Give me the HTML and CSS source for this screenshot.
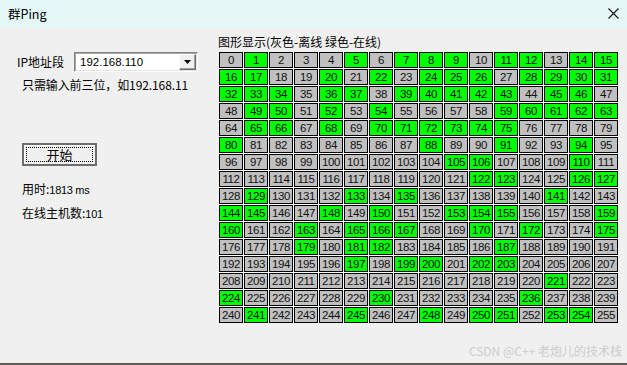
FILE: index.html
```html
<!DOCTYPE html>
<html lang="zh">
<head>
<meta charset="utf-8">
<title>群Ping</title>
<link rel="stylesheet" href="styles.css">
</head>
<body>
<div class="window">
  <div class="titlebar">
    <span class="title">群Ping</span>
    <span class="close"><svg width="11" height="11" viewBox="0 0 11 11"><path d="M0.5 0.5 L10.5 10.5 M10.5 0.5 L0.5 10.5" stroke="#111" stroke-width="1.1" fill="none"/></svg></span>
  </div>
  <div class="main">
    <div class="left">
      <div class="iprow">
        <span class="label">IP地址段</span>
        <div class="combo">
          <span class="combo-text">192.168.110</span>
          <span class="combo-btn"><svg width="7" height="4" viewBox="0 0 7 4"><path d="M0 0 H7 L3.5 4 Z" fill="#000"/></svg></span>
        </div>
      </div>
      <div class="hint">只需输入前三位，如192.168.11</div>
      <div class="btn"><span class="btn-focus">开始</span></div>
      <div class="stat stat-time">用时:<span class="num">1813 ms</span></div>
      <div class="stat stat-count">在线主机数:<span class="num">101</span></div>
    </div>
    <div class="right">
      <div class="heading">图形显示(灰色-离线 绿色-在线)</div>
      <div class="grid">
        <span>0</span><span class="on">1</span><span>2</span><span>3</span><span>4</span><span class="on">5</span><span>6</span><span class="on">7</span><span class="on">8</span><span class="on">9</span><span>10</span><span class="on">11</span><span class="on">12</span><span>13</span><span class="on">14</span><span class="on">15</span>
        <span class="on">16</span><span class="on">17</span><span>18</span><span>19</span><span class="on">20</span><span>21</span><span class="on">22</span><span>23</span><span class="on">24</span><span class="on">25</span><span class="on">26</span><span>27</span><span class="on">28</span><span class="on">29</span><span class="on">30</span><span class="on">31</span>
        <span class="on">32</span><span class="on">33</span><span class="on">34</span><span>35</span><span class="on">36</span><span class="on">37</span><span>38</span><span class="on">39</span><span class="on">40</span><span class="on">41</span><span class="on">42</span><span class="on">43</span><span>44</span><span class="on">45</span><span class="on">46</span><span>47</span>
        <span>48</span><span class="on">49</span><span class="on">50</span><span>51</span><span class="on">52</span><span>53</span><span class="on">54</span><span>55</span><span>56</span><span>57</span><span>58</span><span class="on">59</span><span class="on">60</span><span class="on">61</span><span class="on">62</span><span class="on">63</span>
        <span>64</span><span class="on">65</span><span class="on">66</span><span>67</span><span class="on">68</span><span>69</span><span class="on">70</span><span class="on">71</span><span class="on">72</span><span class="on">73</span><span class="on">74</span><span class="on">75</span><span>76</span><span>77</span><span>78</span><span>79</span>
        <span class="on">80</span><span>81</span><span>82</span><span>83</span><span>84</span><span>85</span><span>86</span><span>87</span><span class="on">88</span><span>89</span><span>90</span><span class="on">91</span><span>92</span><span>93</span><span class="on">94</span><span>95</span>
        <span>96</span><span>97</span><span>98</span><span>99</span><span>100</span><span>101</span><span>102</span><span>103</span><span>104</span><span class="on">105</span><span class="on">106</span><span>107</span><span>108</span><span>109</span><span class="on">110</span><span>111</span>
        <span>112</span><span>113</span><span>114</span><span>115</span><span>116</span><span>117</span><span>118</span><span>119</span><span>120</span><span>121</span><span class="on">122</span><span class="on">123</span><span>124</span><span>125</span><span class="on">126</span><span class="on">127</span>
        <span>128</span><span class="on">129</span><span>130</span><span>131</span><span>132</span><span class="on">133</span><span>134</span><span class="on">135</span><span>136</span><span>137</span><span>138</span><span>139</span><span>140</span><span class="on">141</span><span>142</span><span>143</span>
        <span class="on">144</span><span class="on">145</span><span>146</span><span>147</span><span class="on">148</span><span>149</span><span class="on">150</span><span>151</span><span>152</span><span class="on">153</span><span class="on">154</span><span class="on">155</span><span>156</span><span>157</span><span>158</span><span class="on">159</span>
        <span class="on">160</span><span>161</span><span>162</span><span class="on">163</span><span>164</span><span class="on">165</span><span class="on">166</span><span class="on">167</span><span>168</span><span>169</span><span class="on">170</span><span>171</span><span class="on">172</span><span>173</span><span>174</span><span class="on">175</span>
        <span>176</span><span>177</span><span>178</span><span class="on">179</span><span>180</span><span class="on">181</span><span class="on">182</span><span>183</span><span>184</span><span>185</span><span>186</span><span class="on">187</span><span>188</span><span>189</span><span>190</span><span>191</span>
        <span>192</span><span>193</span><span>194</span><span>195</span><span>196</span><span class="on">197</span><span>198</span><span class="on">199</span><span class="on">200</span><span>201</span><span class="on">202</span><span class="on">203</span><span>204</span><span>205</span><span>206</span><span>207</span>
        <span>208</span><span>209</span><span>210</span><span>211</span><span>212</span><span>213</span><span>214</span><span>215</span><span>216</span><span>217</span><span>218</span><span>219</span><span>220</span><span class="on">221</span><span>222</span><span>223</span>
        <span class="on">224</span><span>225</span><span>226</span><span>227</span><span>228</span><span>229</span><span class="on">230</span><span>231</span><span>232</span><span>233</span><span>234</span><span>235</span><span class="on">236</span><span>237</span><span>238</span><span>239</span>
        <span>240</span><span class="on">241</span><span>242</span><span>243</span><span>244</span><span class="on">245</span><span>246</span><span>247</span><span class="on">248</span><span>249</span><span class="on">250</span><span class="on">251</span><span>252</span><span class="on">253</span><span class="on">254</span><span>255</span>
      </div>
    </div>
  </div>
  <div class="watermark">CSDN @C++ 老炮儿的技术栈</div>
</div>
</body>
</html>
```

FILE: styles.css
```css
* { box-sizing: border-box; }
html, body { margin: 0; padding: 0; }
body {
  width: 627px;
  height: 365px;
  overflow: hidden;
  background: #f0f0f0;
  font-family: "Liberation Sans", "Noto Sans CJK SC", sans-serif;
  font-size: 12px;
  color: #000;
}
.window {
  position: relative;
  width: 627px;
  height: 365px;
  display: flex;
  flex-direction: column;
  background: #f0f0f0;
  border-bottom: 2px solid #5e5a57;
}
.titlebar {
  height: 28px;
  flex: none;
  background: #e5f7f7;
  display: flex;
  align-items: center;
  justify-content: space-between;
  padding-left: 8px;
}
.title {
  font-family: "Noto Sans CJK SC", sans-serif;
  font-size: 12.5px;
  line-height: 16px;
}
.close {
  display: flex;
  align-items: center;
  justify-content: center;
  width: 24px;
  height: 28px;
  padding-right: 4px;
  padding-bottom: 2px;
}
.main {
  flex: 1;
  display: flex;
}
.left {
  width: 218px;
  flex: none;
  padding: 24px 0 0 17px;
  display: flex;
  flex-direction: column;
  align-items: flex-start;
  font-family: "Noto Sans CJK SC", sans-serif;
}
.iprow {
  display: flex;
  align-items: center;
  height: 20px;
}
.label {
  width: 57px;
  font-size: 12px;
  line-height: 16px;
}
.combo {
  width: 124px;
  height: 20px;
  display: flex;
  align-items: stretch;
  background: #fff;
  border-top: 1px solid #828282;
  border-left: 1px solid #828282;
  border-right: 1px solid #fff;
  border-bottom: 1px solid #fff;
  box-shadow: inset 1px 1px 0 #a8a8a8, inset -1px -1px 0 #e3e3e3;
}
.combo-text {
  flex: 1;
  padding-left: 5px;
  font-family: "Liberation Sans", sans-serif;
  font-size: 11.5px;
  line-height: 18px;
}
.combo-btn {
  width: 17px;
  margin: 1px 1px 1px 0;
  background: #f0f0f0;
  border-top: 1px solid #fff;
  border-left: 1px solid #fff;
  border-right: 1px solid #6d6d6d;
  border-bottom: 1px solid #6d6d6d;
  box-shadow: inset -1px -1px 0 #a0a0a0;
  display: flex;
  align-items: center;
  justify-content: center;
}
.hint {
  margin: 5px 0 0 5px;
  font-size: 12px;
  line-height: 16px;
  letter-spacing: -0.1px;
}
.btn {
  margin: 50px 0 0 5px;
  width: 75px;
  height: 23px;
  padding: 2px;
  background: #f0f0f0;
  border: 2px solid #6e6e6e;
  box-shadow: inset 1px 1px 0 #fff;
  display: flex;
}
.btn-focus {
  flex: 1;
  border: 1px dotted #000;
  display: flex;
  align-items: center;
  justify-content: center;
  font-size: 13px;
  line-height: 14px;
}
.stat {
  margin-left: 5px;
  font-size: 12px;
  line-height: 16px;
}
.stat-time { margin-top: 15px; }
.stat-count { margin-top: 7px; }
.num {
  font-family: "Liberation Sans", sans-serif;
  font-size: 11px;
  letter-spacing: -0.3px;
}
.right {
  flex: 1;
  padding-top: 6px;
  display: flex;
  flex-direction: column;
  align-items: flex-start;
}
.heading {
  font-family: "Noto Sans CJK SC", sans-serif;
  font-size: 12px;
  line-height: 16px;
  height: 18px;
}
.grid {
  margin-left: 1px;
  display: grid;
  grid-template-columns: repeat(16, 24px);
  grid-auto-rows: 16px;
  gap: 1px;
  background: #fff;
}
.grid > span {
  background: #c0c0c0;
  border: 1px solid #000;
  font-family: "Liberation Sans", sans-serif;
  font-size: 11.5px;
  line-height: 14px;
  text-align: center;
  letter-spacing: -0.4px;
  color: #111;
  overflow: hidden;
  white-space: nowrap;
}
.grid > span.on { background: #00ff00; }
.watermark {
  position: absolute;
  right: 5px;
  bottom: 5px;
  font-family: "Noto Sans CJK SC", sans-serif;
  font-size: 12px;
  line-height: 14px;
  color: #cdcdcd;
}
```
